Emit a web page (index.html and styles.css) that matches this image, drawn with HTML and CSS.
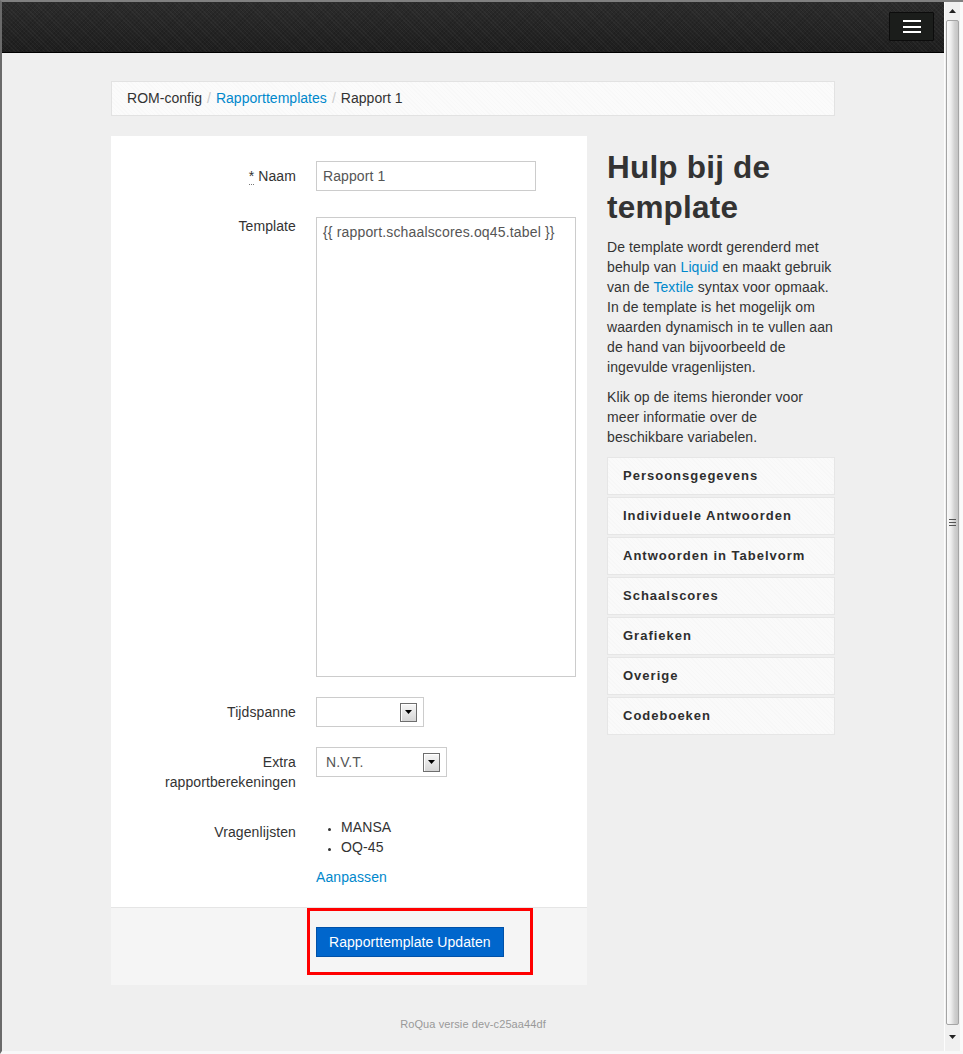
FILE: index.html
```html
<!DOCTYPE html>
<html lang="nl">
<head>
<meta charset="utf-8">
<title>Rapport 1 - ROM-config</title>
<link rel="stylesheet" href="styles.css">
</head>
<body>
<div class="window">
  <div class="viewport">
    <header class="navbar">
      <button class="nav-toggle" type="button" aria-label="Menu">
        <span class="icon-bar"></span>
        <span class="icon-bar"></span>
        <span class="icon-bar"></span>
      </button>
    </header>

    <div class="container">
      <ul class="breadcrumb">
        <li>ROM-config<span class="divider">/</span></li>
        <li><a href="#">Rapporttemplates</a><span class="divider">/</span></li>
        <li class="active">Rapport 1</li>
      </ul>

      <div class="row">
        <form class="panel">
          <div class="panel-body">
            <div class="field">
              <label class="field-label"><abbr title="verplicht">*</abbr> Naam</label>
              <div class="field-control">
                <input class="input input-naam" type="text" value="Rapport 1">
              </div>
            </div>

            <div class="field">
              <label class="field-label">Template</label>
              <div class="field-control">
                <textarea class="textarea">{{ rapport.schaalscores.oq45.tabel }}</textarea>
              </div>
            </div>

            <div class="field">
              <label class="field-label">Tijdspanne</label>
              <div class="field-control">
                <div class="select select-tijd">
                  <span class="select-value"></span>
                  <span class="select-arrow"><svg width="7" height="4" viewBox="0 0 7 4"><path d="M0 0H7L3.5 4Z" fill="#000"/></svg></span>
                </div>
              </div>
            </div>

            <div class="field">
              <label class="field-label">Extra rapportberekeningen</label>
              <div class="field-control">
                <div class="select select-extra">
                  <span class="select-value">N.V.T.</span>
                  <span class="select-arrow"><svg width="7" height="4" viewBox="0 0 7 4"><path d="M0 0H7L3.5 4Z" fill="#000"/></svg></span>
                </div>
              </div>
            </div>

            <div class="field field-last">
              <label class="field-label">Vragenlijsten</label>
              <div class="field-control">
                <ul class="list">
                  <li>MANSA</li>
                  <li>OQ-45</li>
                </ul>
                <a class="link" href="#">Aanpassen</a>
              </div>
            </div>
          </div>

          <div class="form-actions">
            <button class="btn" type="button">Rapporttemplate Updaten</button>
            <div class="highlight"></div>
          </div>
        </form>

        <aside class="help">
          <h1 class="help-title">Hulp bij de template</h1>
          <p>De template wordt gerenderd met behulp van <a href="#">Liquid</a> en maakt gebruik van de <a href="#">Textile</a> syntax voor opmaak. In de template is het mogelijk om waarden dynamisch in te vullen aan de hand van bijvoorbeeld de ingevulde vragenlijsten.</p>
          <p>Klik op de items hieronder voor meer informatie over de beschikbare variabelen.</p>
          <div class="accordion">
            <div class="accordion-item">Persoonsgegevens</div>
            <div class="accordion-item">Individuele Antwoorden</div>
            <div class="accordion-item">Antwoorden in Tabelvorm</div>
            <div class="accordion-item">Schaalscores</div>
            <div class="accordion-item">Grafieken</div>
            <div class="accordion-item">Overige</div>
            <div class="accordion-item">Codeboeken</div>
          </div>
        </aside>
      </div>

      <footer class="footer">RoQua versie dev-c25aa44df</footer>
    </div>
  </div>

  <div class="scrollbar">
    <div class="sb-btn"><svg width="7" height="4" viewBox="0 0 7 4"><path d="M3.5 0L7 4H0Z" fill="#222"/></svg></div>
    <div class="sb-thumb">
      <div class="sb-grip"><span></span><span></span><span></span></div>
    </div>
    <div class="sb-btn sb-btn-down"><svg width="7" height="4" viewBox="0 0 7 4"><path d="M0 0H7L3.5 4Z" fill="#222"/></svg></div>
  </div>
  <div class="edge"></div>
</div>
</body>
</html>
```

FILE: styles.css
```css
* { box-sizing: border-box; }

html, body {
  margin: 0;
  padding: 0;
  overflow: hidden;
  background: #fff;
}

body {
  font-family: "Liberation Sans", Arial, sans-serif;
  font-size: 14px;
  line-height: 20px;
  letter-spacing: 0.1px;
  color: #333;
}

a { color: #0088cc; text-decoration: none; }

.window {
  width: 963px;
  height: 1054px;
  display: flex;
  border-top: 2px solid #808080;
  border-left: 2px solid #6a6a6a;
  border-bottom: 3px solid #f8f8f8;
}

.viewport {
  flex: 1;
  background: #efefef;
  overflow: hidden;
}

/* Navbar */
.navbar {
  height: 51px;
  border-bottom: 1px solid #000;
  background-color: #242424;
  background-image:
    repeating-linear-gradient(45deg, rgba(255,255,255,0.035) 0 1px, transparent 1px 3px),
    repeating-linear-gradient(-45deg, rgba(0,0,0,0.12) 0 1px, transparent 1px 3px),
    linear-gradient(#2c2c2c, #1e1e1e);
  display: flex;
  justify-content: flex-end;
  align-items: flex-start;
  padding: 10px 10px 0 0;
}

.nav-toggle {
  width: 45px;
  height: 29px;
  padding: 0;
  background: #1b1d1b;
  border: 1px solid #0c0c0c;
  border-radius: 1px;
  display: flex;
  flex-direction: column;
  align-items: center;
  justify-content: center;
  gap: 3.5px;
}

.icon-bar {
  display: block;
  width: 18px;
  height: 2px;
  background: #fff;
}

/* Container */
.container {
  width: 724px;
  margin: 0 auto;
}

.breadcrumb {
  list-style: none;
  margin: 28px 0 20px;
  padding: 8px 15px;
  line-height: 17px;
  letter-spacing: 0.03px;
  background-color: #fbfbfb;
  background-image: repeating-linear-gradient(45deg, rgba(0,0,0,0.012) 0 1px, transparent 1px 3px);
  border: 1px solid #e2e2e2;
  display: flex;
}

.breadcrumb li { display: flex; }

.divider {
  color: #ccc;
  padding: 0 5px;
}

.breadcrumb .active { color: #333; }

.row {
  display: flex;
  gap: 20px;
  align-items: flex-start;
}

/* Form panel */
.panel {
  width: 476px;
  background: #fff;
  margin: 0;
}

.panel-body {
  padding: 25px 25px 0;
}

.field {
  display: flex;
  gap: 20px;
  margin-bottom: 20px;
}

.field-label {
  width: 160px;
  flex: none;
  text-align: right;
  padding: 5px 0;
  color: #333;
}

abbr {
  text-decoration: none;
  border-bottom: 1px dotted #777;
  cursor: help;
}

.field-control {
  flex: 1;
  min-width: 0;
}

.input {
  display: block;
  height: 30px;
  width: 220px;
  padding: 4px 6px;
  border: 1px solid #ccc;
  border-radius: 0;
  font: inherit;
  letter-spacing: inherit;
  color: #555;
  background: #fff;
}

.textarea {
  display: block;
  margin-top: 6px;
  width: 260px;
  height: 460px;
  padding: 4px 6px;
  border: 1px solid #ccc;
  border-radius: 0;
  font: inherit;
  letter-spacing: 0.16px;
  line-height: 20px;
  color: #555;
  resize: none;
  background: #fff;
}

.select {
  height: 30px;
  border: 1px solid #ccc;
  background: #fff;
  display: flex;
  align-items: center;
  justify-content: space-between;
  padding: 0 6px 0 9px;
  color: #555;
}

.select-tijd { width: 108px; }
.select-extra { width: 131px; }

.select-arrow {
  width: 17px;
  height: 19px;
  border: 1px solid #6e6e6e;
  background: linear-gradient(#f7f7f7, #d6d6d6);
  box-shadow: inset 1px 1px 0 #fff;
  display: flex;
  align-items: center;
  justify-content: center;
}

.field-last { margin-bottom: 0; }

.list {
  margin: 0 0 10px;
  padding: 0 0 0 25px;
  list-style: disc;
}

.list li::marker { font-size: 11px; }

.link { display: inline-block; }

.form-actions {
  position: relative;
  margin-top: 20px;
  background: #f5f5f5;
  border-top: 1px solid #e5e5e5;
  padding: 19px 0 28px 205px;
}

.btn {
  display: block;
  height: 30px;
  padding: 4px 12px;
  font: inherit;
  letter-spacing: 0.06px;
  line-height: 20px;
  color: #fff;
  background: #0066cc;
  border: 1px solid #0051a8;
  border-radius: 0;
}

.highlight {
  position: absolute;
  left: 196px;
  top: 0;
  width: 226px;
  height: 67px;
  border: 3px solid #ff0000;
  pointer-events: none;
}

/* Help column */
.help {
  width: 228px;
}

.help-title {
  margin: 11px 0 10px;
  font-size: 31.5px;
  line-height: 40px;
  font-weight: bold;
  letter-spacing: 0.2px;
  color: #333;
}

.help p {
  margin: 0 0 10px;
}

.accordion-item {
  height: 38px;
  margin-bottom: 2px;
  padding: 8px 15px;
  border: 1px solid #e6e6e6;
  background-color: #fafafa;
  background-image: repeating-linear-gradient(45deg, rgba(0,0,0,0.012) 0 1px, transparent 1px 3px);
  font-size: 13px;
  font-weight: bold;
  letter-spacing: 1px;
  color: #2e2e2e;
}

.footer {
  padding-top: 29px;
  text-align: center;
  font-size: 11px;
  color: #999;
}

/* Scrollbar */
.scrollbar {
  width: 16px;
  flex: none;
  display: flex;
  flex-direction: column;
  background: #f0f0f0;
  border-left: 1px solid #fdfdfd;
}

.sb-btn {
  height: 18px;
  display: flex;
  align-items: center;
  justify-content: center;
}

.sb-btn-down {
  height: 22px;
  align-items: flex-start;
  padding-top: 6px;
}

.sb-thumb {
  flex: 1;
  margin: 0 1px 4px 1px;
  border: 1px solid #a4a4a4;
  border-radius: 2px;
  background: linear-gradient(90deg, #fafafa 0%, #eeeeee 35%, #d0d0d0 70%, #c4c4c4 100%);
  display: flex;
  align-items: center;
  justify-content: center;
}

.sb-grip {
  display: flex;
  flex-direction: column;
  gap: 2px;
}

.sb-grip span {
  display: block;
  width: 7px;
  height: 1px;
  background: #555;
}

.edge {
  width: 3px;
  flex: none;
  background: #fafafa;
}
```
